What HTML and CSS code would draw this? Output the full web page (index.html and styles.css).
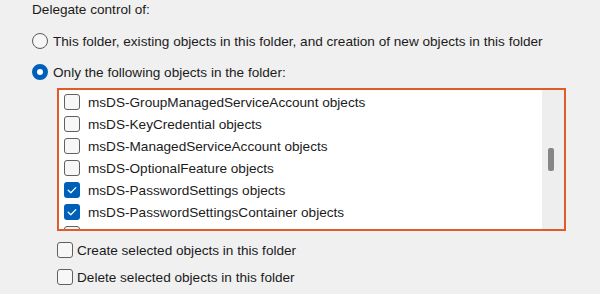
FILE: index.html
```
<!DOCTYPE html>
<html>
<head>
<meta charset="utf-8">
<link rel="stylesheet" href="styles.css">
</head>
<body>
<div class="panel">
  <div class="title">Delegate control of:</div>
  <div class="radio-row first">
    <span class="radio"></span>
    <span class="label">This folder, existing objects in this folder, and creation of new objects in this folder</span>
  </div>
  <div class="radio-row second">
    <span class="radio on"></span>
    <span class="label">Only the following objects in the folder:</span>
  </div>
  <div class="listbox">
    <div class="items">
      <div class="item"><span class="cb"></span><span class="label">msDS-GroupManagedServiceAccount objects</span></div>
      <div class="item"><span class="cb"></span><span class="label">msDS-KeyCredential objects</span></div>
      <div class="item"><span class="cb"></span><span class="label">msDS-ManagedServiceAccount objects</span></div>
      <div class="item"><span class="cb"></span><span class="label">msDS-OptionalFeature objects</span></div>
      <div class="item"><span class="cb on"><svg viewBox="0 0 16 16" width="16" height="16"><path d="M4.2 8.3 L6.8 10.8 L11.8 5.6" fill="none" stroke="#fff" stroke-width="1.3" stroke-linecap="round" stroke-linejoin="round"/></svg></span><span class="label">msDS-PasswordSettings objects</span></div>
      <div class="item"><span class="cb on"><svg viewBox="0 0 16 16" width="16" height="16"><path d="M4.2 8.3 L6.8 10.8 L11.8 5.6" fill="none" stroke="#fff" stroke-width="1.3" stroke-linecap="round" stroke-linejoin="round"/></svg></span><span class="label">msDS-PasswordSettingsContainer objects</span></div>
      <div class="item"><span class="cb"></span></div>
    </div>
    <div class="scrollbar"><div class="thumb"></div></div>
  </div>
  <div class="check-row create">
    <span class="cb"></span>
    <span class="label">Create selected objects in this folder</span>
  </div>
  <div class="check-row delete">
    <span class="cb"></span>
    <span class="label">Delete selected objects in this folder</span>
  </div>
</div>
</body>
</html>
```
FILE: styles.css
```
html, body {
  margin: 0;
  padding: 0;
  background: #f0f0f0;
}
body {
  width: 600px;
  height: 294px;
  overflow: hidden;
  font-family: "Liberation Sans", Arial, sans-serif;
  font-size: 13.6px;
  color: #1b1b1b;
}
.panel {
  display: flex;
  flex-direction: column;
  padding-left: 32px;
}
.title {
  height: 20px;
  line-height: 20px;
}
.radio-row, .check-row {
  display: flex;
  align-items: center;
  height: 20px;
}
.radio-row.first { margin-top: 11px; }
.radio-row.second { margin-top: 11px; }
.radio {
  box-sizing: border-box;
  width: 16px;
  height: 16px;
  border-radius: 50%;
  border: 1px solid #5a5a5a;
  background: #f6f6f6;
  margin-right: 5px;
  flex: none;
}
.radio.on {
  border: 5px solid #005fb8;
  background: #fff;
}
.listbox {
  margin-top: 6px;
  margin-left: 25px;
  width: 509px;
  height: 143px;
  box-sizing: border-box;
  border: 2px solid #e2592b;
  background: #fff;
  display: flex;
  overflow: hidden;
}
.items {
  flex: 1;
  padding-top: 1px;
  padding-left: 5px;
  overflow: hidden;
}
.item {
  display: flex;
  align-items: center;
  height: 22px;
}
.cb {
  box-sizing: border-box;
  width: 16px;
  height: 16px;
  border-radius: 3px;
  border: 1px solid #606060;
  background: #f7f7f7;
  flex: none;
  display: flex;
}
.cb.on {
  border: none;
  background: #005fb8;
}
.item .cb { margin-right: 8px; }
.scrollbar {
  width: 22px;
  flex: none;
  background: #eeeeee;
  position: relative;
}
.thumb {
  position: absolute;
  left: 6px;
  top: 58px;
  width: 6px;
  height: 23px;
  border-radius: 2px;
  background: #868686;
}
.check-row.create { margin-top: 9px; margin-left: 25px; }
.check-row.delete { margin-top: 7px; margin-left: 25px; }
.check-row .cb { margin-right: 4px; }
```
